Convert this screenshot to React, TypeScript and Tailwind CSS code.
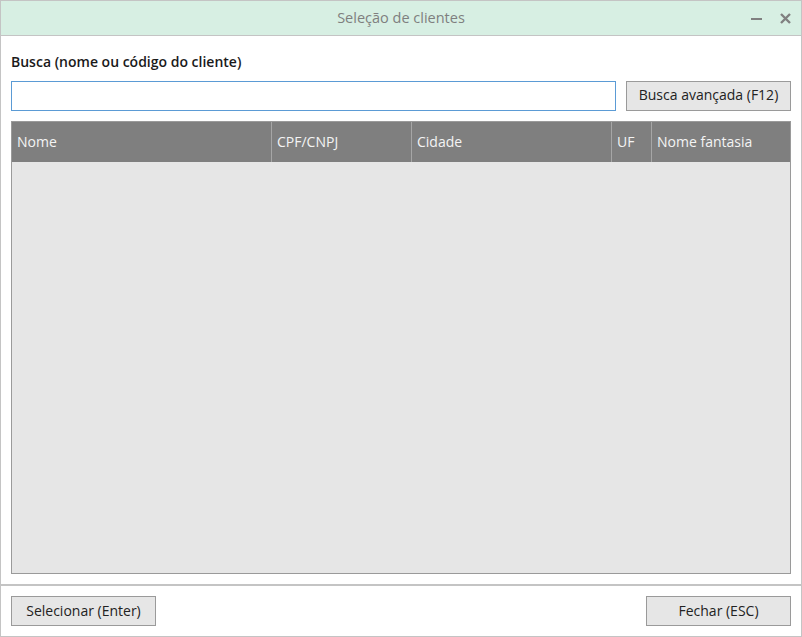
const columns = [
  { label: 'Nome', width: 'w-[260px]' },
  { label: 'CPF/CNPJ', width: 'w-[140px]' },
  { label: 'Cidade', width: 'w-[200px]' },
  { label: 'UF', width: 'w-[40px]' },
  { label: 'Nome fantasia', width: 'flex-1' },
];

export default function App() {
  return (
    <div
      className="w-[802px] h-[637px] bg-white border border-[#c4c4c4] flex flex-col text-[14px] text-[#222]"
      style={{ fontFamily: '"Open Sans", "Noto Sans", sans-serif' }}
    >
      {/* Title bar */}
      <div className="h-[35px] shrink-0 bg-[#d7efe3] border-b border-[#c4c4c4] relative flex items-center justify-center">
        <span className="text-[#7f7f7f] text-[14.5px] pb-[1px]">Seleção de clientes</span>
        <div className="absolute right-[10px] top-0 h-full flex items-center gap-[18px]">
          <svg width="11" height="11" viewBox="0 0 11 11">
            <rect x="0" y="5" width="11" height="2" fill="#808080" />
          </svg>
          <svg width="11" height="11" viewBox="0 0 11 11">
            <path d="M1 1 L10 10 M10 1 L1 10" stroke="#808080" strokeWidth="2.4" />
          </svg>
        </div>
      </div>

      {/* Content */}
      <div className="flex-1 flex flex-col px-[10px] pt-[16px] pb-[10px] border-b border-[#c4c4c4] min-h-0">
        <label className="font-semibold text-[14px] leading-[20px] text-[#1a1a1a]">
          Busca (nome ou código do cliente)
        </label>
        <div className="flex gap-[10px] mt-[9px]">
          <input
            className="flex-1 h-[30px] border border-[#5b9bd5] outline-none px-2 bg-white"
            style={{ fontFamily: 'inherit' }}
          />
          <button className="w-[165px] h-[30px] pb-[3px] bg-[#e6e6e6] border border-[#9a9a9a] text-[14px] text-[#222]">
            Busca avançada (F12)
          </button>
        </div>
        <div className="flex-1 mt-[10px] border border-[#9a9a9a] bg-[#e6e6e6] flex flex-col min-h-0">
          <div className="h-[40px] bg-[#7f7f7f] flex shrink-0">
            {columns.map((c, i) => (
              <div
                key={c.label}
                className={`${c.width} h-full flex items-center px-[5px] pb-[2px] text-[#f4f4f4] ${
                  i < columns.length - 1 ? 'border-r border-[#a6a6a6]' : ''
                }`}
              >
                {c.label}
              </div>
            ))}
          </div>
        </div>
      </div>

      {/* Footer */}
      <div className="h-[51px] shrink-0 border-t border-[#c4c4c4] flex items-center justify-between px-[10px]">
        <button className="w-[145px] h-[30px] pb-[2px] bg-[#e6e6e6] border border-[#9a9a9a] text-[14px] text-[#222]">
          Selecionar (Enter)
        </button>
        <button className="w-[145px] h-[30px] pb-[2px] bg-[#e6e6e6] border border-[#9a9a9a] text-[14px] text-[#222]">
          Fechar (ESC)
        </button>
      </div>
    </div>
  );
}
